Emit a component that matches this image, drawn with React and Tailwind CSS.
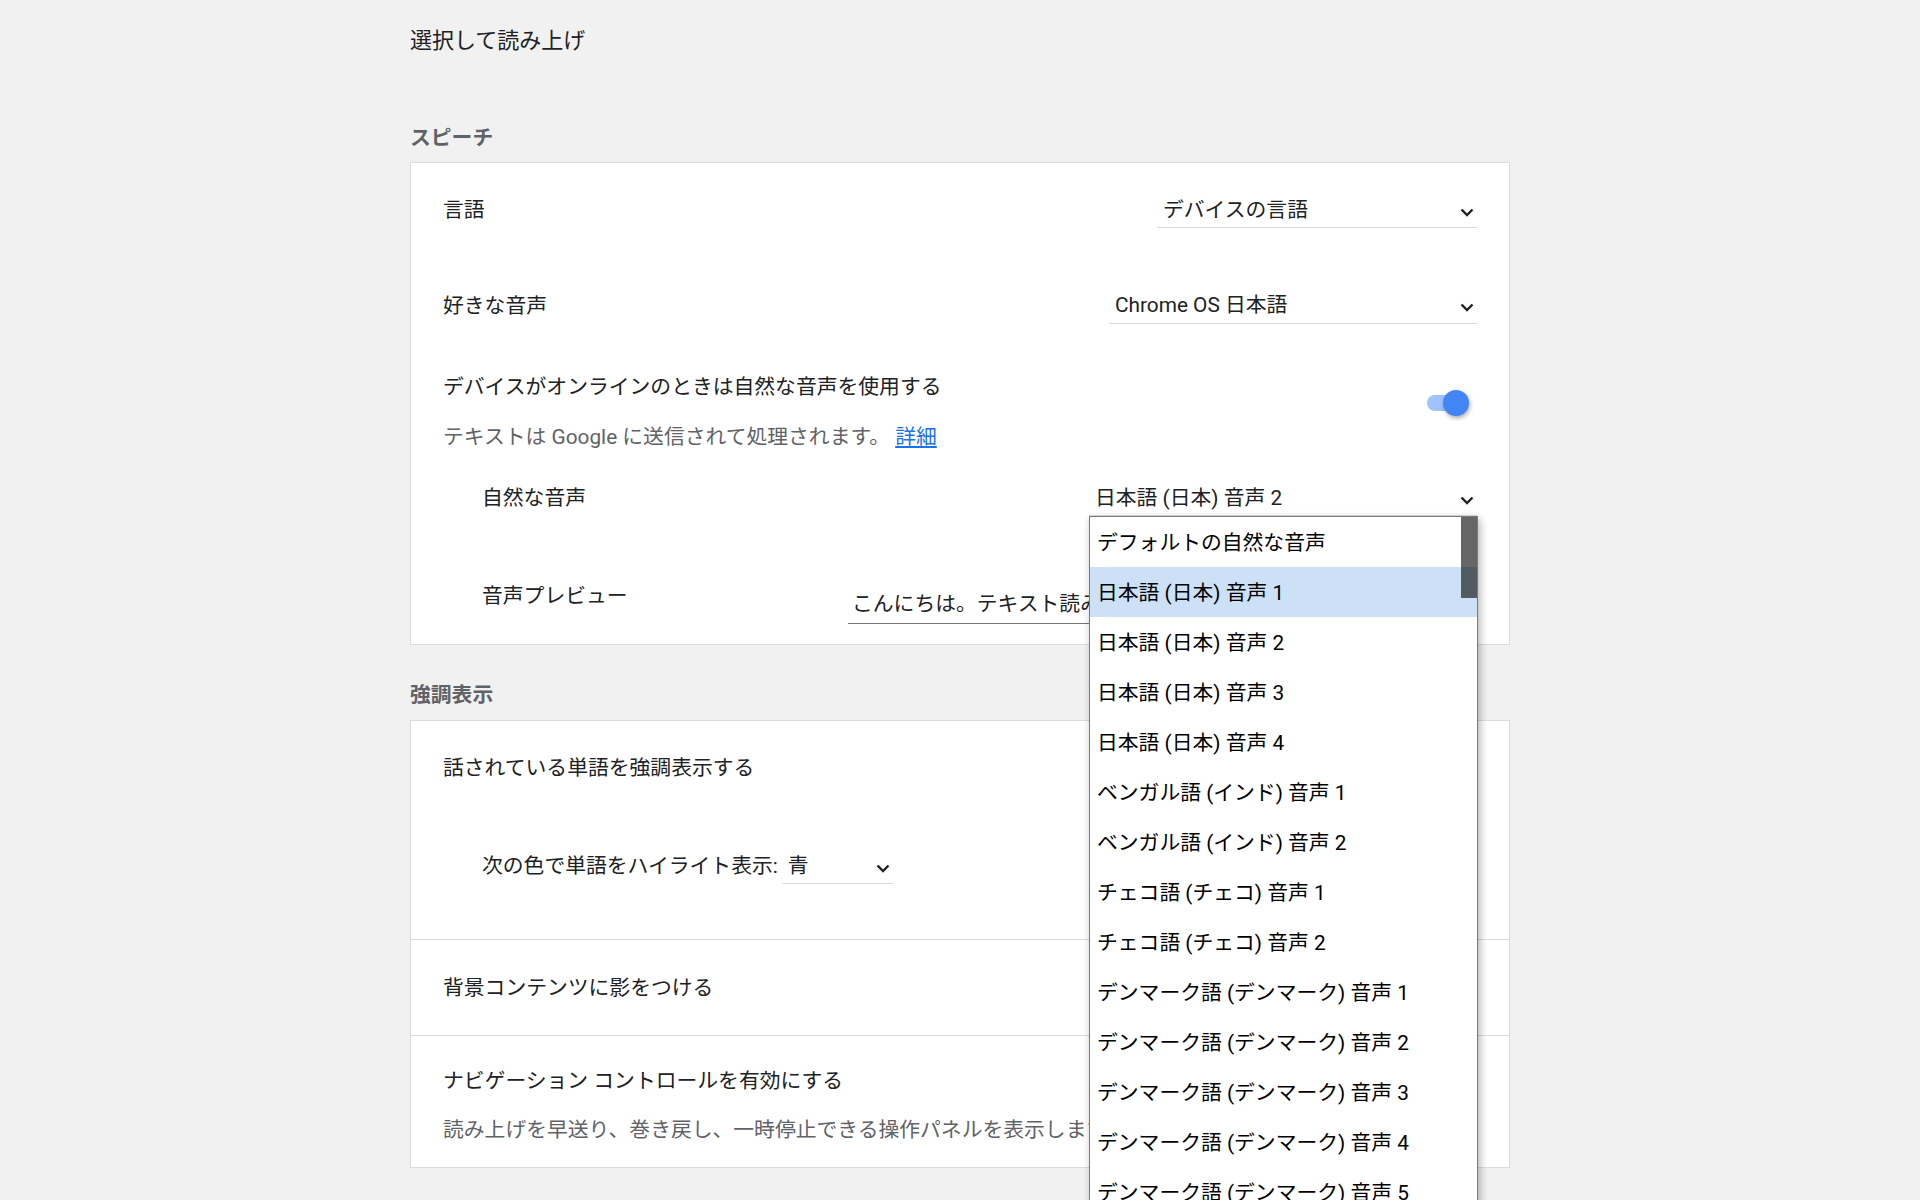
import React from "react";

const voices = [
  "デフォルトの自然な音声",
  "日本語 (日本) 音声 1",
  "日本語 (日本) 音声 2",
  "日本語 (日本) 音声 3",
  "日本語 (日本) 音声 4",
  "ベンガル語 (インド) 音声 1",
  "ベンガル語 (インド) 音声 2",
  "チェコ語 (チェコ) 音声 1",
  "チェコ語 (チェコ) 音声 2",
  "デンマーク語 (デンマーク) 音声 1",
  "デンマーク語 (デンマーク) 音声 2",
  "デンマーク語 (デンマーク) 音声 3",
  "デンマーク語 (デンマーク) 音声 4",
  "デンマーク語 (デンマーク) 音声 5",
];

function Chevron() {
  return (
    <svg width="14" height="9" viewBox="0 0 14 9" className="mt-[5px] shrink-0">
      <path d="M1.5 1.5 L7 7 L12.5 1.5" fill="none" stroke="#202124" strokeWidth="2.4" />
    </svg>
  );
}

function Select({ value, className, children }) {
  return (
    <div
      className={`relative flex items-center justify-between h-[36px] border-b border-[#dadce0] pl-[6px] pr-[3px] ${className}`}
    >
      <span>{value}</span>
      <Chevron />
      {children}
    </div>
  );
}

function Toggle() {
  return (
    <div className="relative flex items-center w-[42px] h-[26px]">
      <div className="w-[36px] h-[16px] rounded-full bg-[#a1c2fa]" />
      {/* knob */}
      <div className="absolute right-0 top-0 w-[26px] h-[26px] rounded-full bg-[#4285f4] shadow-[1px_2px_4px_rgba(0,0,0,0.35)]" />
    </div>
  );
}

function VoiceMenu() {
  return (
    <div className="absolute left-0 top-[36px] z-10 w-[389px] border border-[#7a7a7a] bg-white shadow-[2px_3px_8px_rgba(0,0,0,0.3)]">
      {voices.map((v, i) => (
        <div
          key={v}
          className={`flex items-center h-[50px] pl-[7px] pt-[2px] text-black ${i === 1 ? "bg-[#cce0f6]" : ""}`}
        >
          {v}
        </div>
      ))}
      {/* scrollbar thumb */}
      <div className="absolute right-0 top-0 w-[16px] h-[81px] bg-black/60" />
    </div>
  );
}

export default function App() {
  return (
    <div className="h-[1200px] overflow-hidden bg-[#f1f1f1] font-[family-name:Roboto,'Noto_Sans_CJK_JP',sans-serif] text-[20.8px] leading-[30px] text-[#202124]">
      <div className="w-[1100px] mx-auto pt-[26px]">
        <h1 className="text-[22px] leading-[30px] font-normal">選択して読み上げ</h1>

        {/* Speech */}
        <h2 className="mt-[66px] pt-[1px] font-bold text-[#5f6368]">スピーチ</h2>
        <div className="mt-[9px] bg-white border border-[#dadce0]">
          <div className="flex items-center justify-between h-[94px] px-[32px]">
            <span>言語</span>
            <Select value="デバイスの言語" className="w-[320px]" />
          </div>
          <div className="flex items-center justify-between h-[96px] px-[32px] pt-[1px]">
            <span>好きな音声</span>
            <Select value="Chrome OS 日本語" className="w-[368px]" />
          </div>
          <div className="flex items-start justify-between px-[32px] pt-[19px]">
            <div>
              <div>デバイスがオンラインのときは自然な音声を使用する</div>
              <div className="mt-[20px] text-[#5f6368]">
                テキストは Google に送信されて処理されます。{" "}
                <a href="#" className="text-[#1a73e8] underline">
                  詳細
                </a>
              </div>
            </div>
            <div className="mt-[18px] mr-[8px]">
              <Toggle />
            </div>
          </div>
          <div className="flex items-center justify-between h-[92px] pl-[71px] pr-[32px]">
            <span>自然な音声</span>
            <Select value="日本語 (日本) 音声 2" className="w-[388px]">
              <VoiceMenu />
            </Select>
          </div>
          <div className="flex items-start justify-between pl-[71px] pr-[32px] pb-[20px]">
            <span className="mt-[37px]">音声プレビュー</span>
            <div className="mt-[40px] flex items-center h-[40px] w-[629px] border-b border-[#757575] pl-[4px] overflow-hidden whitespace-nowrap">
              こんにちは。テキスト読み上げの音声をお試しください。
            </div>
          </div>
        </div>

        {/* Highlighting */}
        <h2 className="mt-[33px] pt-[2px] font-bold text-[#5f6368]">強調表示</h2>
        <div className="mt-[10px] bg-white border border-[#dadce0]">
          <div className="border-b border-[#dadce0] pt-[32px] pb-[55px]">
            <div className="px-[32px]">話されている単語を強調表示する</div>
            <div className="mt-[65px] flex items-center pl-[71px]">
              <span>次の色で単語をハイライト表示:</span>
              <Select value="青" className="ml-[4px] w-[111px]" />
            </div>
          </div>
          <div className="flex items-center h-[96px] px-[32px] border-b border-[#dadce0]">
            背景コンテンツに影をつける
          </div>
          <div className="px-[32px] pt-[30px] pb-[22px]">
            <div>ナビゲーション コントロールを有効にする</div>
            <div className="mt-[19px] text-[#5f6368]">
              読み上げを早送り、巻き戻し、一時停止できる操作パネルを表示します
            </div>
          </div>
        </div>
      </div>
    </div>
  );
}
